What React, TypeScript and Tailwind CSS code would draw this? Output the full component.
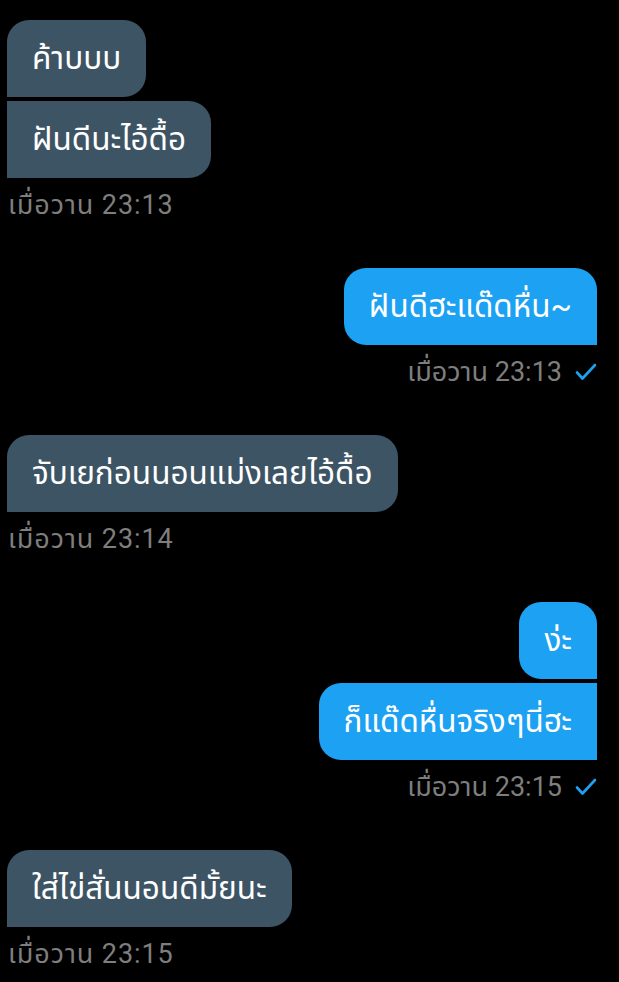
import React from 'react';

type Msg = { text: string };
type Group = { mine: boolean; messages: Msg[]; time: string };

const groups: Group[] = [
  { mine: false, messages: [{ text: 'ค้าบบบ' }, { text: 'ฝันดีนะไอ้ดื้อ' }], time: 'เมื่อวาน 23:13' },
  { mine: true, messages: [{ text: 'ฝันดีฮะแด๊ดหื่น~' }], time: 'เมื่อวาน 23:13' },
  { mine: false, messages: [{ text: 'จับเยก่อนนอนแม่งเลยไอ้ดื้อ' }], time: 'เมื่อวาน 23:14' },
  { mine: true, messages: [{ text: 'ง่ะ' }, { text: 'ก็แด๊ดหื่นจริงๆนี่ฮะ' }], time: 'เมื่อวาน 23:15' },
  { mine: false, messages: [{ text: 'ใส่ไข่สั่นนอนดีมั้ยนะ' }], time: 'เมื่อวาน 23:15' },
];

const CheckIcon = () => (
  <svg width="22" height="20" viewBox="0 0 22 20" fill="none" className="ml-[13px]">
    <path d="M2 10.5l5.5 6L20 3" stroke="#1da1f2" strokeWidth="2.6" strokeLinecap="round" strokeLinejoin="round" />
  </svg>
);

// grouped bubbles: the tail side loses its rounding on the join
const bubbleCorners = (mine: boolean, idx: number) => {
  const first = idx === 0;
  if (mine) {
    return `rounded-tl-[22px] rounded-bl-[22px] rounded-br-none ${first ? 'rounded-tr-[22px]' : 'rounded-tr-none'}`;
  }
  return `rounded-tr-[22px] rounded-br-[22px] rounded-bl-none ${first ? 'rounded-tl-[22px]' : 'rounded-tl-none'}`;
};

const App: React.FC = () => {
  return (
    <div
      className="min-h-[982px] w-full bg-black pl-[7px] pr-[22px] pt-[20px]"
      style={{ fontFamily: 'Roboto, "Noto Sans", "Noto Sans Thai", "DejaVu Sans", sans-serif' }}
    >
      <div className="flex flex-col gap-[49px]">
        {groups.map((g, gi) => (
          <div key={gi} className={`flex flex-col ${g.mine ? 'items-end' : 'items-start'}`}>
            <div className={`flex flex-col gap-[4px] ${g.mine ? 'items-end' : 'items-start'}`}>
              {g.messages.map((m, mi) => (
                <div
                  key={mi}
                  className={`h-[77px] flex items-center px-[25px] text-[31.5px] leading-[38px] text-white ${
                    g.mine ? 'bg-[#1da1f2]' : 'bg-[#3d5465]'
                  } ${bubbleCorners(g.mine, mi)}`}
                >
                  {m.text}
                </div>
              ))}
            </div>
            <div
              className={`mt-[13px] flex items-center h-[28px] text-[27px] leading-[28px] text-[#7e7e7e] ${
                g.mine ? 'tracking-[0px]' : 'tracking-[0.9px]'
              }`}
            >
              <span className={g.mine ? '' : 'ml-[1px]'}>{g.time}</span>
              {g.mine && <CheckIcon />}
            </div>
          </div>
        ))}
      </div>
    </div>
  );
};

export default App;
